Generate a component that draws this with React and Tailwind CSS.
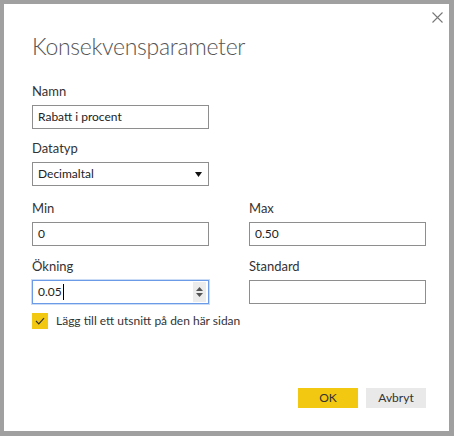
import React from 'react';

const font = { fontFamily: 'Lato, "Segoe UI", "Liberation Sans", sans-serif' };

const Field = ({ label, children, className = '' }) => (
  <div className={`flex flex-col ${className}`}>
    <label className="text-[13px] leading-[20px] text-[#333]">{label}</label>
    <div className="mt-[4px]">{children}</div>
  </div>
);

const TextBox = ({ value, focused, spinner }) => (
  <div
    className={`relative flex h-[24px] w-[177px] items-center border ${
      focused ? 'border-[#6b9be6] shadow-[0_0_0_1px_rgba(107,155,230,0.35)]' : 'border-[#8e8e8e]'
    } bg-white`}
  >
    <span className="pl-[5px] text-[12px] text-[#222]">{value}</span>
    {focused && <span className="ml-px h-[16px] w-px bg-black" />}
    {spinner && (
      <div className="absolute right-[2px] top-[1px] flex h-[20px] w-[13px] flex-col items-center justify-center gap-[2px] bg-[#ececec]">
        <svg width="7" height="4" viewBox="0 0 7 4"><path d="M0 4 L3.5 0 L7 4 Z" fill="#555" /></svg>
        <svg width="7" height="4" viewBox="0 0 7 4"><path d="M0 0 L3.5 4 L7 0 Z" fill="#555" /></svg>
      </div>
    )}
  </div>
);

export default function App() {
  return (
    <div className="h-[436px] w-[454px] bg-[#a0a0a0] pb-[5px] pl-[4px] pr-[5px] pt-[4px]" style={font}>
      <div className="relative h-full w-full bg-white px-[28px]">
        <button className="absolute right-[6px] top-[8px] flex h-[11px] w-[11px] items-center justify-center">
          <svg width="11" height="11" viewBox="0 0 11 11">
            <path d="M0.5 0.5 L10.5 10.5 M10.5 0.5 L0.5 10.5" stroke="#777" strokeWidth="1.1" />
          </svg>
        </button>

        <h1 className="pt-[27px] text-[23px] font-light leading-[30px] tracking-[-0.3px] text-[#555]">Konsekvensparameter</h1>

        <Field label="Namn" className="mt-[20px]">
          <TextBox value="Rabatt i procent" />
        </Field>

        <Field label="Datatyp" className="mt-[9px]">
          <div className="flex h-[24px] w-[177px] items-center justify-between border border-[#8e8e8e] pl-[5px] pr-[6px]">
            <span className="text-[12px] text-[#222]">Decimaltal</span>
            <svg width="7" height="5" viewBox="0 0 7 5"><path d="M0 0 L7 0 L3.5 5 Z" fill="#111" /></svg>
          </div>
        </Field>

        <div className="mt-[12px] grid grid-cols-[177px_177px] gap-x-[40px] gap-y-[10px]">
          <Field label="Min">
            <TextBox value="0" />
          </Field>
          <Field label="Max">
            <TextBox value="0.50" />
          </Field>
          <Field label="Ökning">
            <TextBox value="0.05" focused spinner />
          </Field>
          <Field label="Standard">
            <TextBox value="" />
          </Field>
        </div>

        <label className="mt-[8px] flex items-center gap-[8px]">
          <span className="flex h-[16px] w-[16px] items-center justify-center bg-[#f2c811]">
            <svg width="10" height="8" viewBox="0 0 10 8">
              <path d="M1 4 L3.8 6.8 L9 1.2" stroke="#333" strokeWidth="1.2" fill="none" />
            </svg>
          </span>
          <span className="text-[12px] text-[#333]">Lägg till ett utsnitt på den här sidan</span>
        </label>

        <div className="absolute bottom-[23px] right-[23px] flex gap-[8px]">
          <button className="h-[20px] w-[60px] bg-[#f2c811] text-[12px] text-[#333]">OK</button>
          <button className="h-[20px] w-[60px] bg-[#e9e9e9] text-[12px] text-[#333]">Avbryt</button>
        </div>
      </div>
    </div>
  );
}
